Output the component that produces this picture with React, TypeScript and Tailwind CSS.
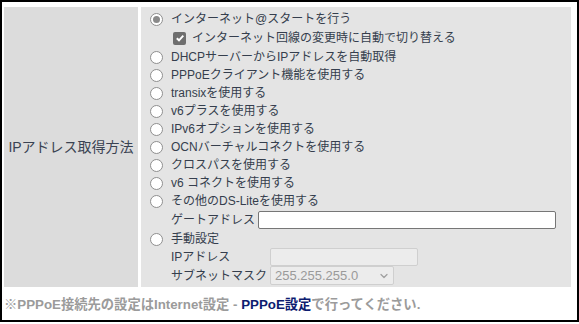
import { ChevronDown } from 'lucide-react';

const font = { fontFamily: '"Liberation Sans", "Noto Sans CJK JP", sans-serif' };

const options = [
  'DHCPサーバーからIPアドレスを自動取得',
  'PPPoEクライアント機能を使用する',
  'transixを使用する',
  'v6プラスを使用する',
  'IPv6オプションを使用する',
  'OCNバーチャルコネクトを使用する',
  'クロスパスを使用する',
  'v6 コネクトを使用する',
  'その他のDS-Liteを使用する',
];

function Radio({ checked }: { checked?: boolean }) {
  return (
    <span className="flex h-[13px] w-[13px] shrink-0 items-center justify-center rounded-full border border-[#8f8f8f] bg-white">
      {checked && <span className="h-[7px] w-[7px] rounded-full bg-[#8a8a8a]" />}
    </span>
  );
}

function RadioRow({ label, checked }: { label: string; checked?: boolean }) {
  return (
    <div className="flex h-[18px] items-center gap-[8px]">
      <Radio checked={checked} />
      <span>{label}</span>
    </div>
  );
}

export default function App() {
  return (
    <div className="h-[324px] w-[579px] bg-white" style={font}>
      <div className="flex h-[322px] w-[579px] flex-col border-2 border-black pl-[2px] pr-[6px] pt-[5px]">
        {/* table */}
        <div className="flex h-[280px] shrink-0 gap-[3px]">
          <div className="flex w-[134px] shrink-0 items-center justify-center whitespace-nowrap bg-[#dcdcdc] pt-[1px] text-[14px] text-[#3a4352]">
            IPアドレス取得方法
          </div>
          <div className="flex flex-1 flex-col bg-[#e4e4e4] pl-[9px] pt-[3px] text-[12px] text-[#353e4d]">
            <RadioRow label="インターネット@スタートを行う" checked />
            <div className="flex h-[20px] items-center gap-[6px] pl-[23px]">
              <span className="flex h-[13px] w-[13px] shrink-0 items-center justify-center rounded-[2px] bg-[#6e6e6e]">
                <svg width="10" height="10" viewBox="0 0 10 10">
                  <path d="M1.8 5.2 L4 7.3 L8.3 2.6" fill="none" stroke="white" strokeWidth="1.9" />
                </svg>
              </span>
              <span>インターネット回線の変更時に自動で切り替える</span>
            </div>
            {options.map((o) => (
              <RadioRow key={o} label={o} />
            ))}
            <div className="flex h-[20px] items-center gap-[3px] pl-[21px]">
              <span>ゲートアドレス</span>
              <div className="h-[18px] w-[298px] rounded-[2px] border border-[#767676] bg-white" />
            </div>
            <RadioRow label="手動設定" />
            <div className="flex h-[18px] items-center gap-[3px] pl-[21px]">
              <span className="w-[96px]">IPアドレス</span>
              <div className="h-[18px] w-[148px] rounded-[2px] border border-[#cfcfcf] bg-[#ececec]" />
            </div>
            <div className="flex h-[19px] items-center gap-[3px] pl-[21px]">
              <span className="w-[96px]">サブネットマスク</span>
              <div className="flex h-[19px] w-[124px] items-center justify-between rounded-[2px] border border-[#cfcfcf] bg-[#ececec] pl-[4px] pr-[3px] text-[13px] text-[#9a9a9a]">
                <span>255.255.255.0</span>
                <ChevronDown size={12} strokeWidth={2.5} className="text-[#a0a0a0]" />
              </div>
            </div>
          </div>
        </div>
        {/* note */}
        <div className="flex flex-1 items-center pt-[3px] text-[13.3px] font-bold text-[#9b9b9b]">
          <span>
            ※PPPoE接続先の設定はInternet設定 - <span className="text-[#0d1c70]">PPPoE設定</span>で行ってください.
          </span>
        </div>
      </div>
    </div>
  );
}
